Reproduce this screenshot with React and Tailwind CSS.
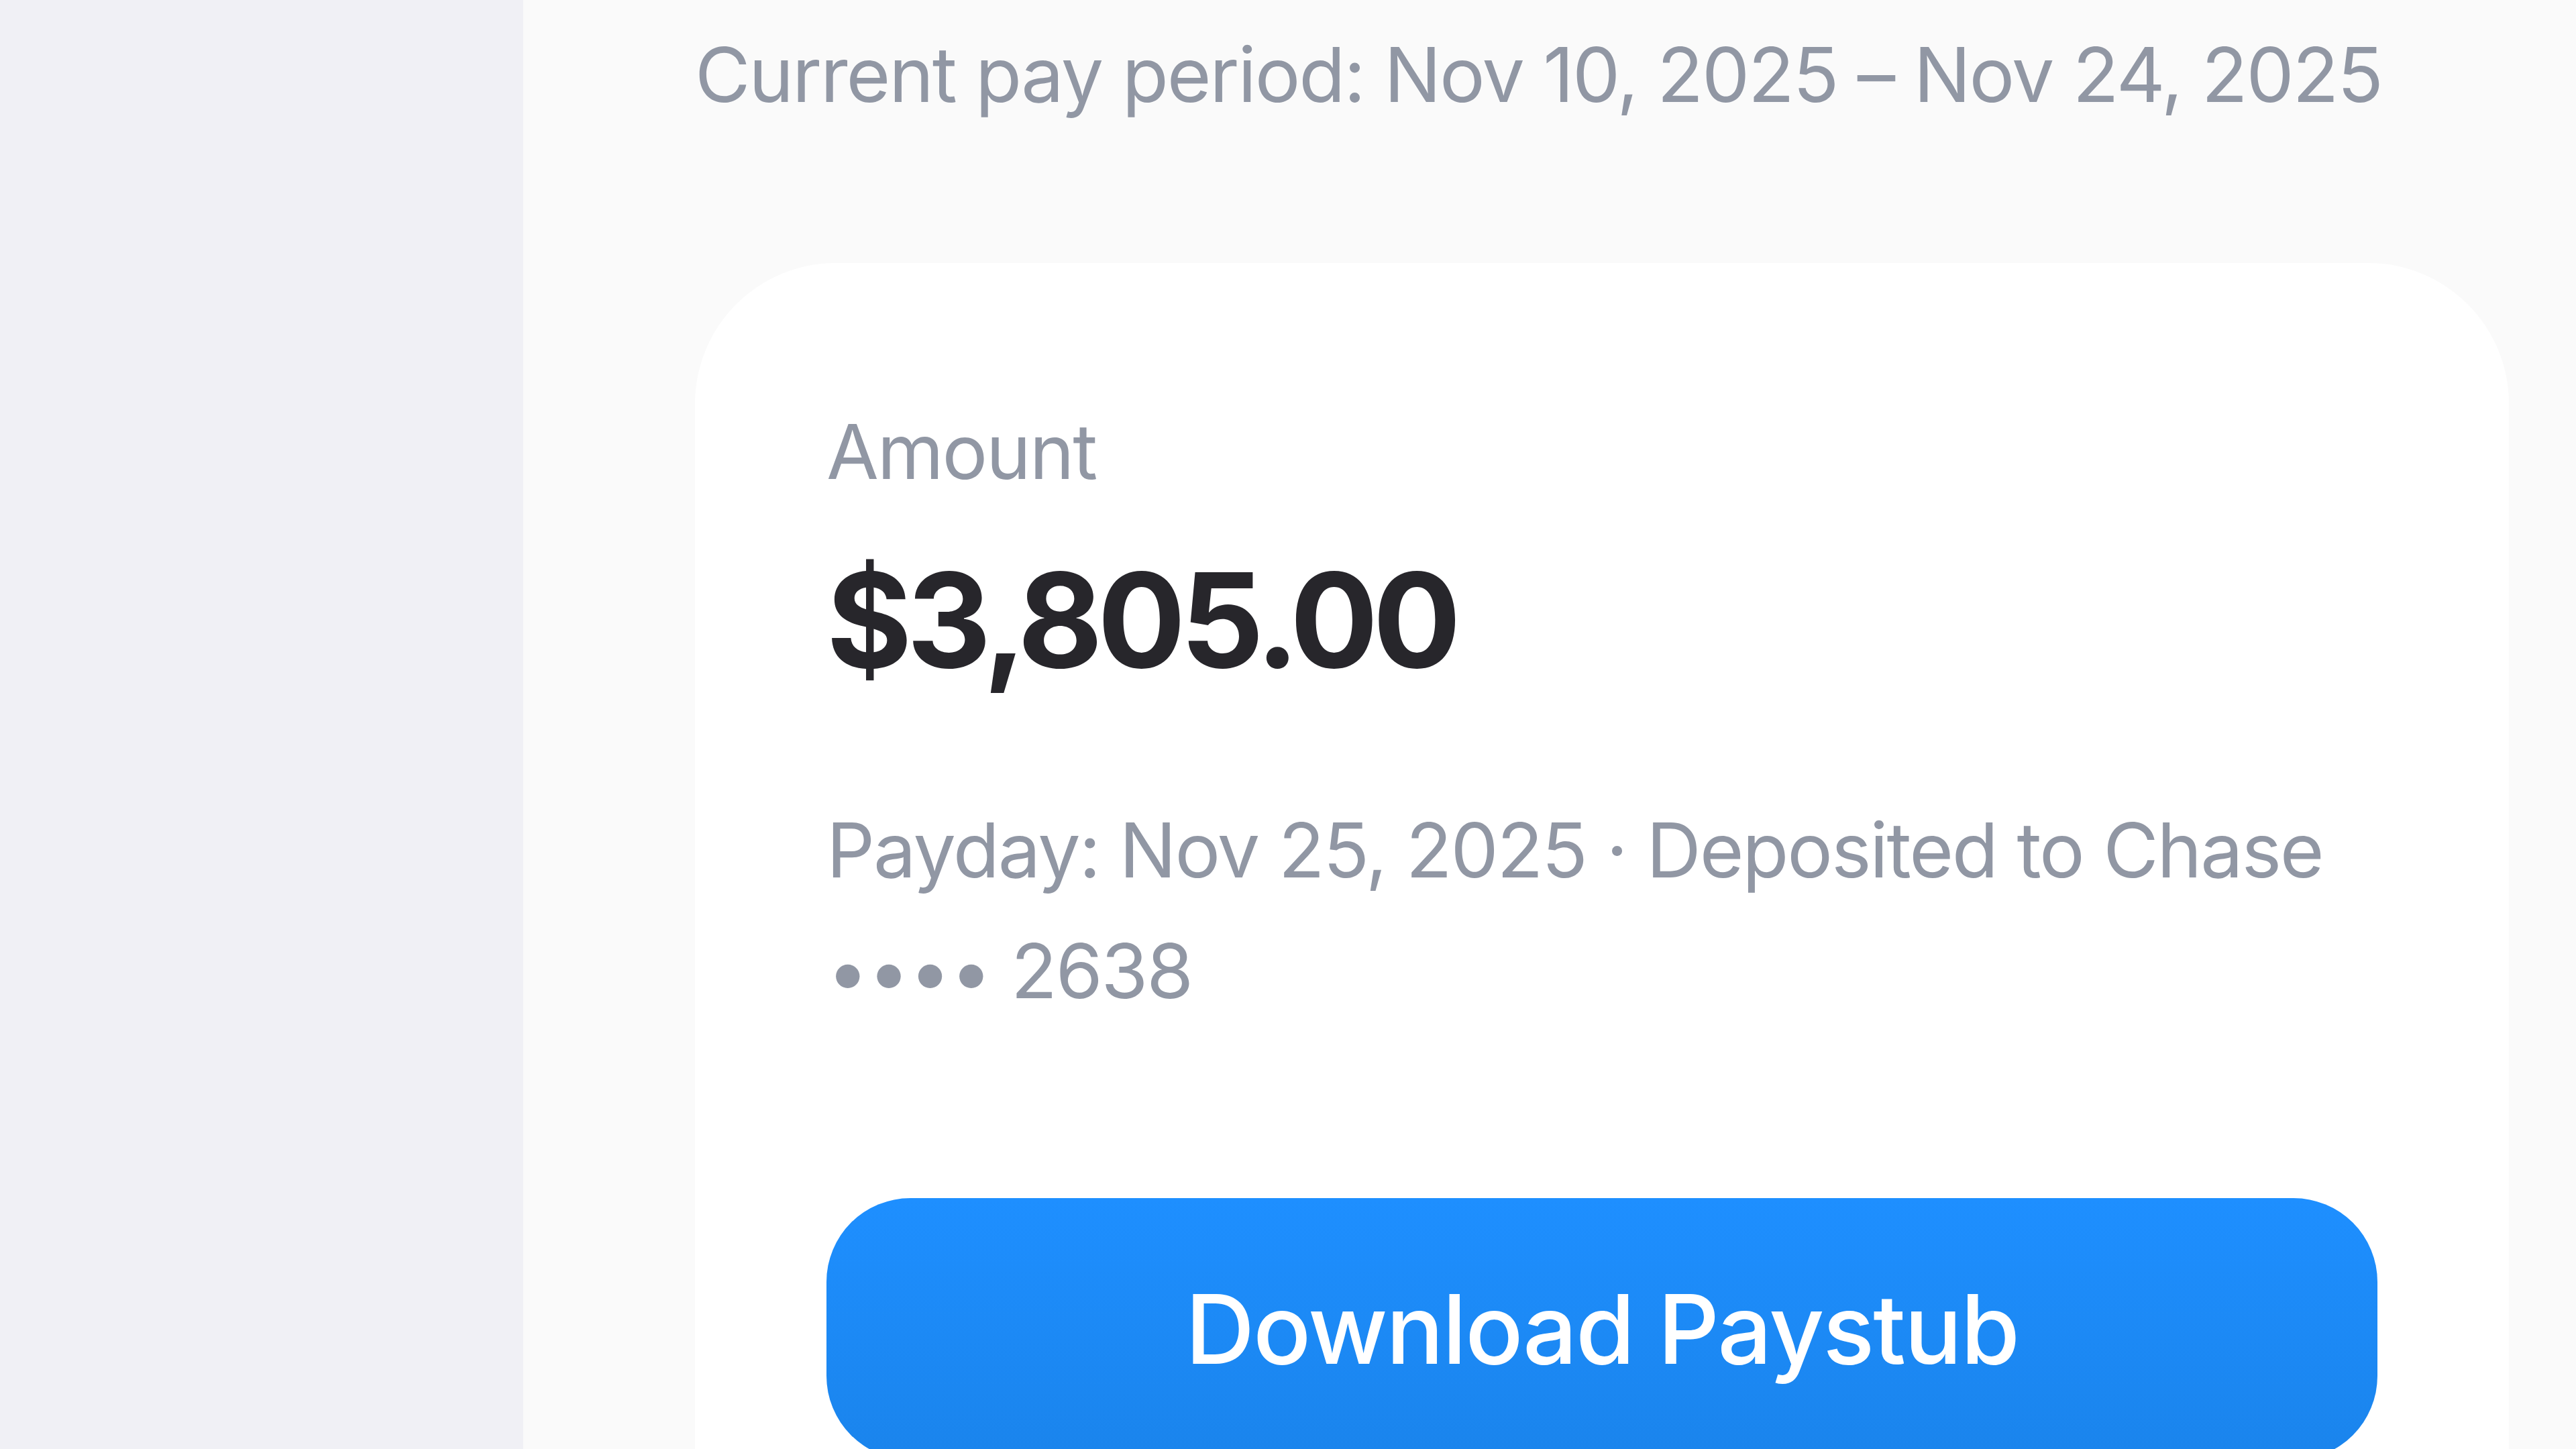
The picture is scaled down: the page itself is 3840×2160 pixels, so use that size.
export default function App() {
  return (
    <div className="flex h-[2160px] w-[3840px] overflow-hidden font-['Inter','Noto_Sans',sans-serif]">
      <aside className="w-[780px] shrink-0 bg-[#f0f0f5]" />
      <main className="flex-1 bg-[#fafafa] pl-[256px] pr-[100px] pt-[26px]">
        <p className="text-[113px] leading-[170px] tracking-[-2.2px] text-[#9197a4]">
          Current pay period: Nov 10, 2025 – Nov 24, 2025
        </p>

        <div className="mt-[196px] rounded-[210px] bg-white px-[196px] pt-[196px] pb-[200px]">
          <p className="text-[113px] leading-[170px] tracking-[-2.2px] text-[#9197a4]">Amount</p>
          <p className="mt-[49px] text-[195px] font-bold leading-[234px] tracking-[-8px] text-[#27262b]">
            $3,805.00
          </p>
          <p className="mt-[136px] text-[113px] leading-[180px] tracking-[-2.2px] text-[#9197a4]">
            Payday: Nov 25, 2025 · Deposited to Chase •••• 2638
          </p>

          <button
            type="button"
            className="mt-[249px] flex h-[390px] w-full items-center justify-center rounded-[125px] bg-gradient-to-b from-[#1e8fff] to-[#1a84ec] text-[143px] font-medium tracking-[-2.1px] text-white"
          >
            Download Paystub
          </button>
        </div>
      </main>
    </div>
  );
}
